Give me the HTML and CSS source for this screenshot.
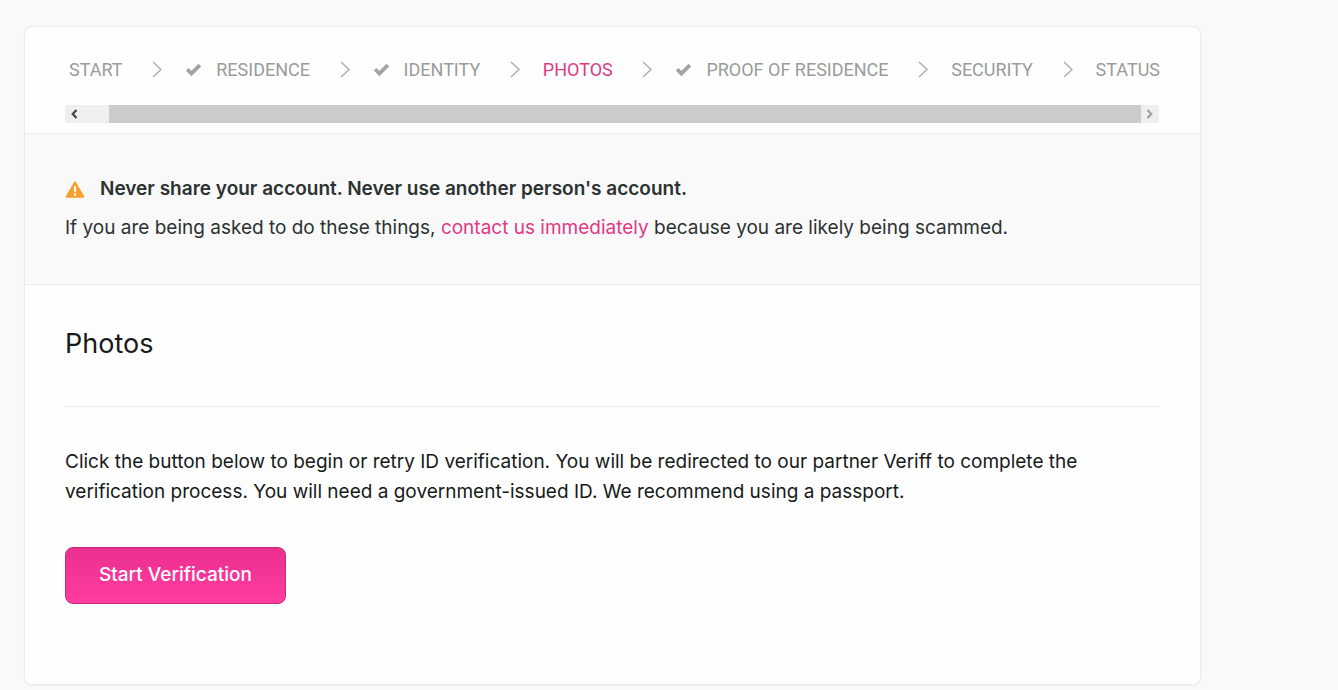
FILE: index.html
```html
<!DOCTYPE html>
<html lang="en">
<head>
<meta charset="utf-8">
<meta name="viewport" content="width=device-width, initial-scale=1">
<title>Photos – Verification</title>
<link rel="stylesheet" href="styles.css">
</head>
<body>
<svg class="sprite" aria-hidden="true">
  <symbol id="chevron" viewBox="0 0 10 18"><path d="M1 1L9 8.5L1 16" fill="none" stroke="currentColor" stroke-width="1.3"/></symbol>
  <symbol id="check" viewBox="0 0 17 14"><path d="M.8 7.6L3.4 5L6.4 7.8L13.6 .8L16.2 3.4L6.4 13.2Z" fill="currentColor"/></symbol>
</svg>
<main class="card">
  <nav class="progress" aria-label="Verification steps">
    <ol class="steps">
      <li class="step">START</li>
      <li class="step"><svg class="chevron"><use href="#chevron"/></svg><svg class="check"><use href="#check"/></svg>RESIDENCE</li>
      <li class="step"><svg class="chevron"><use href="#chevron"/></svg><svg class="check"><use href="#check"/></svg>IDENTITY</li>
      <li class="step" aria-current="step"><svg class="chevron"><use href="#chevron"/></svg><span class="current">PHOTOS</span></li>
      <li class="step"><svg class="chevron"><use href="#chevron"/></svg><svg class="check"><use href="#check"/></svg>PROOF OF RESIDENCE</li>
      <li class="step"><svg class="chevron"><use href="#chevron"/></svg>SECURITY</li>
      <li class="step"><svg class="chevron"><use href="#chevron"/></svg>STATUS</li>
    </ol>
    <div class="scrollbar">
      <button class="scroll-button" type="button" aria-label="Scroll left"><svg class="arrow" viewBox="0 0 6 8"><path d="M5 .8L2 4L5 7.2" fill="none" stroke="currentColor" stroke-width="1.8"/></svg></button>
      <div class="track"><div class="thumb"></div></div>
      <button class="scroll-button" type="button" aria-label="Scroll right" disabled><svg class="arrow" viewBox="0 0 6 8"><path d="M1 .8L4 4L1 7.2" fill="none" stroke="currentColor" stroke-width="1.8"/></svg></button>
    </div>
  </nav>
  <section class="warning">
    <h2 class="warning-title"><svg class="warning-icon" viewBox="0 0 18 16"><path d="M9 1.4L16.8 14.8H1.2Z" fill="#f7a02d" stroke="#f7a02d" stroke-width="2" stroke-linejoin="round"/><path d="M9 5V10M9 11.6V13.8" stroke="#fff" stroke-width="2"/></svg>Never share your account. Never use another person's account.</h2>
    <p class="warning-text">If you are being asked to do these things, <a class="link" href="#contact">contact us immediately</a> because you are likely being scammed.</p>
  </section>
  <section class="content">
    <h1 class="title">Photos</h1>
    <p class="description">Click the button below to begin or retry ID verification. You will be redirected to our partner Veriff to complete the verification process. You will need a government-issued ID. We recommend using a passport.</p>
    <button class="primary" type="button">Start Verification</button>
  </section>
</main>
</body>
</html>
```
FILE: styles.css
```css
* { box-sizing: border-box; }
body {
  margin: 0;
  padding: 26px 137px 5px 24px;
  background: #f9f9f9;
  color: #171a19;
  font-family: Inter, "Noto Sans", sans-serif;
  font-size: 19px;
  line-height: 30px;
}
.sprite { position: absolute; width: 0; height: 0; }
.card {
  background: #fefefe;
  border: 1px solid #ebebeb;
  border-radius: 8px;
  box-shadow: 0 1px 3px rgba(0, 0, 0, .04);
}
.progress { padding: 28px 40px 10px; }
.steps {
  display: flex;
  justify-content: space-between;
  margin: 0;
  padding: 0 0 20px 4px;
  list-style: none;
  color: #999c98;
  font-family: Roboto, Arial, sans-serif;
  font-size: 18px;
  white-space: nowrap;
}
.step { display: flex; align-items: center; }
.chevron { width: 10px; height: 18px; margin-right: 23px; color: #aaa; }
.check { width: 17px; height: 14px; margin-right: 14px; color: #a2a3a2; }
.current { color: #df3a86; }
.scrollbar { display: flex; height: 18px; margin-right: 1px; background: #efefef; }
.scroll-button {
  display: flex;
  align-items: center;
  justify-content: center;
  width: 18px;
  padding: 0 1px 0 0;
  border: 0;
  background: transparent;
  color: #444;
}
.scroll-button:disabled { color: #a3a3a3; }
.arrow { width: 8px; height: 10px; }
.track { flex: 1; padding-left: 26px; }
.thumb { height: 100%; background: #cbcbcb; }
.warning {
  padding: 40px 40px 41px;
  background: #f9f9f9;
  border: solid #ebebeb;
  border-width: 1px 0;
  color: #2c3231;
}
.warning-title {
  display: flex;
  align-items: center;
  gap: 15px;
  margin: 0 0 9px;
  font-size: 19px;
  font-weight: 600;
}
.warning-icon { width: 20px; height: 17px; }
.warning-text { margin: 0; }
.link { color: #df3a86; text-decoration: none; }
.content { padding: 41px 40px 80px; }
.title {
  margin: 0 0 40px;
  padding-bottom: 44px;
  border-bottom: 1px solid #ebebeb;
  font-size: 27px;
  line-height: 36px;
  font-weight: 400;
}
.description { margin: 0 0 40px; }
.primary {
  padding: 13px 33px 14px;
  border: 1px solid #c62b7b;
  border-radius: 8px;
  background: linear-gradient(#eb2f90, #ff3c9f);
  color: #fff;
  font: 500 19px/28px Inter, "Noto Sans", sans-serif;
}
```
